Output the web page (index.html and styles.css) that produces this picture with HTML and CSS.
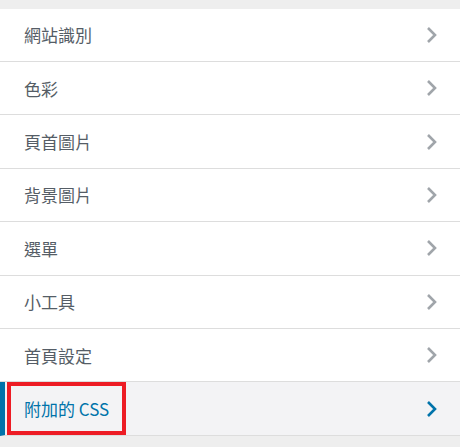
FILE: index.html
```html
<!DOCTYPE html>
<html lang="zh-Hant">
<head>
    <meta charset="UTF-8">
    <title>自訂</title>
    <link rel="stylesheet" href="styles.css">
</head>
<body>
    <ul class="panel-list">
        <li class="section">網站識別<svg class="arrow" viewBox="0 0 12 18"><polyline points="2,2 9,9 2,16"/></svg></li>
        <li class="section">色彩<svg class="arrow" viewBox="0 0 12 18"><polyline points="2,2 9,9 2,16"/></svg></li>
        <li class="section">頁首圖片<svg class="arrow" viewBox="0 0 12 18"><polyline points="2,2 9,9 2,16"/></svg></li>
        <li class="section">背景圖片<svg class="arrow" viewBox="0 0 12 18"><polyline points="2,2 9,9 2,16"/></svg></li>
        <li class="section">選單<svg class="arrow" viewBox="0 0 12 18"><polyline points="2,2 9,9 2,16"/></svg></li>
        <li class="section">小工具<svg class="arrow" viewBox="0 0 12 18"><polyline points="2,2 9,9 2,16"/></svg></li>
        <li class="section">首頁設定<svg class="arrow" viewBox="0 0 12 18"><polyline points="2,2 9,9 2,16"/></svg></li>
        <li class="section active"><span class="highlight">附加的 CSS</span><svg class="arrow" viewBox="0 0 12 18"><polyline points="2,2 9,9 2,16"/></svg></li>
    </ul>
</body>
</html>
```

FILE: styles.css
```css
body {
    margin: 0;
    background: #eeeeee;
    font-family: "Noto Sans CJK TC", "Open Sans", sans-serif;
}
.panel-list {
    list-style: none;
    margin: 0;
    padding: 8.6px 0 0;
}
.section {
    position: relative;
    display: flex;
    align-items: center;
    justify-content: space-between;
    height: 52.4px;
    padding: 0 22px 0 24px;
    background: #fff;
    border-bottom: 1px solid #dddddd;
    color: #555d66;
    font-size: 17px;
}
.arrow {
    width: 12px;
    height: 18px;
    fill: none;
    stroke: #a0a5aa;
    stroke-width: 2.6;
}
.section.active {
    background: #f3f3f5;
    color: #0073aa;
    border-left: 5px solid #0073aa;
    padding-left: 19px;
}
.section.active .arrow {
    stroke: #0073aa;
}
.highlight {
    position: relative;
}
.highlight::after {
    content: "";
    position: absolute;
    left: -17px;
    right: -17px;
    top: -14px;
    bottom: -14px;
    border: 4px solid #ed1c24;
}
```
